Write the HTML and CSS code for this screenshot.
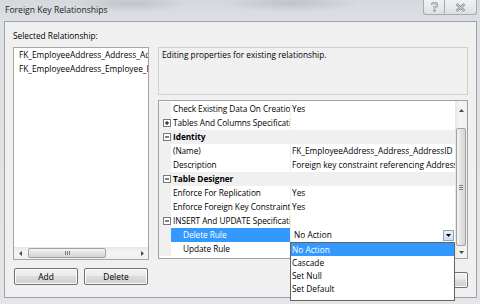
FILE: index.html
```html
<!DOCTYPE html>
<html lang="en">
  <head>
    <meta charset="UTF-8" />
    <title>Foreign Key Relationships</title>
    <link rel="stylesheet" href="styles.css">
  </head>
  <body>
    <div id="window">
      <!-- title bar -->
      <div class="titlebar">
        <span class="title">Foreign Key Relationships</span>
        <div class="caption-buttons">
          <span class="cap-btn help">
            <svg width="9" height="10" viewBox="0 0 9 10">
              <path d="M2 3 Q2 0.8 4.5 0.8 Q7 0.8 7 3 Q7 4.6 4.5 5.2 V6.8" fill="none" stroke="#8c9096" stroke-width="2.2"/>
              <path d="M2 3 Q2 0.8 4.5 0.8 Q7 0.8 7 3 Q7 4.6 4.5 5.2 V6.8" fill="none" stroke="#eef0f2" stroke-width="0.8"/>
              <rect x="3.4" y="7.6" width="2.2" height="2" fill="#8c9096"/>
            </svg>
          </span>
          <span class="cap-btn close">
            <svg width="11" height="9" viewBox="0 0 11 9">
              <path d="M1.5 1 L9.5 8 M9.5 1 L1.5 8" stroke="#8c9096" stroke-width="2.6"/>
              <path d="M1.5 1 L9.5 8 M9.5 1 L1.5 8" stroke="#eef0f2" stroke-width="0.9"/>
            </svg>
          </span>
        </div>
      </div>

      <div class="client">
        <!-- left side: relationships -->
        <div class="left-panel">
          <div class="panel-label">Selected Relationship:</div>
          <div class="listbox">
            <div class="list-items">
              <div class="list-item">FK_EmployeeAddress_Address_AddressID</div>
              <div class="list-item">FK_EmployeeAddress_Employee_EmployeeID</div>
            </div>
            <div class="hscroll">
              <span class="sb-arrow">
                <svg width="3" height="5" viewBox="0 0 3 5"><path d="M3 0 L0 2.5 L3 5 Z" fill="#4a4a4a"/></svg>
              </span>
              <span class="sb-thumb h">
                <span class="grip"></span><span class="grip"></span><span class="grip"></span>
              </span>
              <span class="sb-fill"></span>
              <span class="sb-arrow">
                <svg width="3" height="5" viewBox="0 0 3 5"><path d="M0 0 L3 2.5 L0 5 Z" fill="#4a4a4a"/></svg>
              </span>
            </div>
          </div>
          <div class="list-buttons">
            <button class="win-btn">Add</button>
            <button class="win-btn">Delete</button>
          </div>
        </div>

        <!-- right side: properties -->
        <div class="right-panel">
          <div class="description">Editing properties for existing relationship.</div>

          <div class="propgrid">
            <div class="rows">
              <div class="row">
                <span class="gutter"></span>
                <span class="name">Check Existing Data On Creation Or Re-Enabling</span>
                <span class="value">Yes</span>
              </div>
              <div class="row">
                <span class="gutter">
                  <svg class="expander" width="8" height="8" viewBox="0 0 8 8"><rect x="0.5" y="0.5" width="7" height="7" fill="#fff" stroke="#7a7a7a"/><path d="M2 4 H6 M4 2 V6" stroke="#000"/></svg>
                </span>
                <span class="name">Tables And Columns Specification</span>
                <span class="value"></span>
              </div>
              <div class="row cat">
                <span class="gutter">
                  <svg class="expander" width="8" height="8" viewBox="0 0 8 8"><rect x="0.5" y="0.5" width="7" height="7" fill="#fff" stroke="#7a7a7a"/><path d="M2 4 H6" stroke="#000"/></svg>
                </span>
                <span class="name">Identity</span>
                <span class="value"></span>
              </div>
              <div class="row">
                <span class="gutter"></span>
                <span class="name">(Name)</span>
                <span class="value">FK_EmployeeAddress_Address_AddressID</span>
              </div>
              <div class="row">
                <span class="gutter"></span>
                <span class="name">Description</span>
                <span class="value">Foreign key constraint referencing Address.AddressID.</span>
              </div>
              <div class="row cat">
                <span class="gutter">
                  <svg class="expander" width="8" height="8" viewBox="0 0 8 8"><rect x="0.5" y="0.5" width="7" height="7" fill="#fff" stroke="#7a7a7a"/><path d="M2 4 H6" stroke="#000"/></svg>
                </span>
                <span class="name">Table Designer</span>
                <span class="value"></span>
              </div>
              <div class="row">
                <span class="gutter"></span>
                <span class="name">Enforce For Replication</span>
                <span class="value">Yes</span>
              </div>
              <div class="row">
                <span class="gutter"></span>
                <span class="name">Enforce Foreign Key Constraint</span>
                <span class="value">Yes</span>
              </div>
              <div class="row">
                <span class="gutter">
                  <svg class="expander" width="8" height="8" viewBox="0 0 8 8"><rect x="0.5" y="0.5" width="7" height="7" fill="#fff" stroke="#7a7a7a"/><path d="M2 4 H6" stroke="#000"/></svg>
                </span>
                <span class="name">INSERT And UPDATE Specification</span>
                <span class="value"></span>
              </div>
              <div class="row selected">
                <span class="gutter"></span>
                <span class="name sub">Delete Rule</span>
                <span class="value editing">
                  <span>No Action</span>
                  <span class="drop-btn">
                    <svg width="5" height="3" viewBox="0 0 5 3"><path d="M0 0 H5 L2.5 3 Z" fill="#000"/></svg>
                  </span>
                  <div class="dropdown-list">
                    <div class="dd-item active">No Action</div>
                    <div class="dd-item">Cascade</div>
                    <div class="dd-item">Set Null</div>
                    <div class="dd-item">Set Default</div>
                  </div>
                </span>
              </div>
              <div class="row">
                <span class="gutter"></span>
                <span class="name sub">Update Rule</span>
                <span class="value">No Action</span>
              </div>
            </div>
            <div class="vscroll">
              <span class="sb-arrow up">
                <svg width="5" height="3" viewBox="0 0 5 3"><path d="M0 3 L2.5 0 L5 3 Z" fill="#4a4a4a"/></svg>
              </span>
              <span class="sb-thumb v">
                <span class="grip"></span><span class="grip"></span><span class="grip"></span>
              </span>
              <span class="sb-fill"></span>
              <span class="sb-arrow down">
                <svg width="5" height="3" viewBox="0 0 5 3"><path d="M0 0 H5 L2.5 3 Z" fill="#4a4a4a"/></svg>
              </span>
            </div>
          </div>

          <div class="dialog-buttons">
            <button class="win-btn close-btn">Close</button>
          </div>
        </div>
      </div>
    </div>
  </body>
</html>
```

FILE: styles.css
```css
* {
  box-sizing: border-box;
}

body {
  margin: 0;
  width: 480px;
  height: 304px;
  overflow: hidden;
  font-family: "Open Sans", "Noto Sans", sans-serif;
  font-size: 8.3px;
  color: #000;
  background: #dadde1;
}

#window {
  height: 304px;
  display: flex;
  flex-direction: column;
  background:
    radial-gradient(ellipse 60px 8px at 130px 4px, rgba(150, 155, 160, 0.35), transparent),
    radial-gradient(ellipse 70px 9px at 290px 3px, rgba(150, 155, 160, 0.35), transparent),
    linear-gradient(180deg, #d5d8dc 0px, #dcdfe3 21px, #e4e6e9 100%);
}

/* title bar */
.titlebar {
  height: 21px;
  flex-shrink: 0;
  display: flex;
  justify-content: space-between;
  align-items: flex-start;
  padding: 0 3px 0 5px;
}

.title {
  line-height: 20px;
  font-size: 8.6px;
  color: #222;
}

.caption-buttons {
  display: flex;
}

.cap-btn {
  height: 15px;
  display: flex;
  align-items: center;
  justify-content: center;
  border: 1px solid #a7abb0;
  border-top: none;
  background: linear-gradient(180deg, #f1f2f4, #dde0e3);
}

.cap-btn.help {
  width: 21px;
  border-right: none;
  border-radius: 0 0 0 3px;
}

.cap-btn.close {
  width: 33px;
  border-radius: 0 0 3px 0;
}

/* client area */
.client {
  flex: 1;
  min-height: 0;
  margin: 0 3px 6px 4px;
  padding: 8px 8px 0 8px;
  border: 1px solid #9ea2a7;
  background: #f0f0f0;
  display: flex;
  gap: 9px;
}

.left-panel {
  width: 136px;
  flex: none;
  display: flex;
  flex-direction: column;
}

.panel-label {
  line-height: 12px;
  margin-bottom: 5px;
}

.listbox {
  height: 213px;
  border: 1px solid #a5a5a5;
  background: #fff;
  display: flex;
  flex-direction: column;
}

.list-items {
  flex: 1;
  padding: 0 5px;
  overflow: hidden;
}

.list-item {
  line-height: 14px;
  white-space: nowrap;
}

/* scrollbars */
.hscroll {
  height: 12px;
  display: flex;
  background: linear-gradient(180deg, #e6e6e6, #f4f4f4 40%, #f0f0f0);
}

.vscroll {
  width: 12px;
  flex: none;
  display: flex;
  flex-direction: column;
  background: linear-gradient(90deg, #e6e6e6, #f4f4f4 40%, #f0f0f0);
}

.sb-arrow {
  display: flex;
  align-items: center;
  justify-content: center;
}

.hscroll .sb-arrow {
  width: 12px;
}

.vscroll .sb-arrow.up {
  height: 18px;
}

.vscroll .sb-arrow.down {
  height: 12px;
}

.sb-fill {
  flex: 1;
}

.sb-thumb {
  display: flex;
  align-items: center;
  justify-content: center;
  gap: 1px;
  border: 1px solid #a2a2a2;
  border-radius: 2px;
}

.sb-thumb.h {
  width: 78px;
  margin: 1px 0 1px 2px;
  background: linear-gradient(180deg, #f4f4f4, #e2e2e2 50%, #d6d6d6);
}

.sb-thumb.v {
  height: 118px;
  margin: 9px 1px 0 1px;
  flex-direction: column;
  background: linear-gradient(90deg, #f4f4f4, #e2e2e2 50%, #d6d6d6);
}

.sb-thumb.h .grip {
  width: 1px;
  height: 4px;
  background: #7a7a7a;
}

.sb-thumb.v .grip {
  width: 4px;
  height: 1px;
  background: #7a7a7a;
}

/* buttons */
.list-buttons {
  display: flex;
  gap: 6px;
  margin: 8px 0 0 1px;
}

.win-btn {
  width: 64px;
  height: 17px;
  padding: 0;
  font-family: inherit;
  font-size: 8.4px;
  color: #000;
  border: 1px solid #707070;
  border-radius: 2px;
  background: linear-gradient(180deg, #f2f2f2 0%, #ebebeb 45%, #dddddd 50%, #cfcfcf 100%);
  box-shadow: inset 0 0 0 1px #fcfcfc;
}

/* right panel */
.right-panel {
  width: 310px;
  flex: none;
  min-width: 0;
  display: flex;
  flex-direction: column;
}

.description {
  height: 48px;
  margin-top: 17px;
  padding: 0 3px;
  line-height: 13px;
  overflow: hidden;
  border: 1px solid #cfcfcf;
  background: #f0f0f0;
}

.propgrid {
  height: 159px;
  margin-top: 5px;
  border: 1px solid #a0a0a0;
  background: #fff;
  display: flex;
}

.rows {
  flex: 1;
  min-width: 0;
  padding-top: 1px;
}

.row {
  height: 14px;
  line-height: 14px;
  display: flex;
}

.row .gutter {
  width: 12px;
  flex-shrink: 0;
  padding: 3px 0 0 4px;
  background: #f0f0f0;
}

.expander {
  display: block;
}

.row .name {
  width: 120px;
  flex-shrink: 0;
  padding-left: 2px;
  letter-spacing: -0.06px;
  white-space: nowrap;
  overflow: hidden;
  border-right: 1px solid #f0f0f0;
}

.row .name.sub {
  padding-left: 12px;
}

.row .value {
  flex: 1;
  min-width: 0;
  padding-left: 1px;
  white-space: nowrap;
  overflow: hidden;
}

.row.cat {
  background: #f0f0f0;
}

.row.cat .name {
  font-weight: bold;
}

.row.selected .name {
  background: #3399ff;
  color: #fff;
}

.row .value.editing {
  position: relative;
  overflow: visible;
  padding-left: 3px;
  padding-right: 1px;
  display: flex;
  justify-content: space-between;
  align-items: flex-start;
}

.drop-btn {
  width: 11px;
  height: 11px;
  margin-top: 2px;
  display: flex;
  align-items: center;
  justify-content: center;
  border: 1px solid #8fa5c0;
  background: linear-gradient(180deg, #e8eef6, #d3dfee);
}

.dropdown-list {
  position: absolute;
  top: 14px;
  left: -1px;
  width: 165px;
  padding-bottom: 5px;
  border: 1px solid #646464;
  background: #fff;
  z-index: 2;
}

.dd-item {
  height: 13px;
  line-height: 13px;
  padding-left: 1px;
}

.dd-item.active {
  background: #3399ff;
  color: #fff;
}

.dialog-buttons {
  display: flex;
  justify-content: flex-end;
  margin-top: 13px;
}

.close-btn {
  width: 78px;
  height: 16px;
}
```
